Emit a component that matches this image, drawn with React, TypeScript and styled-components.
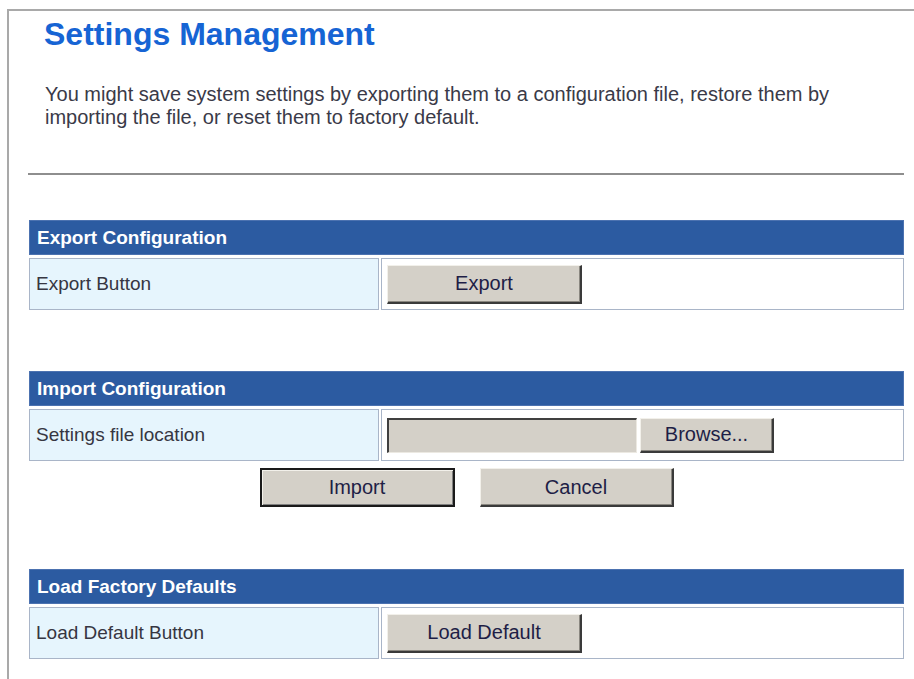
import styled, { createGlobalStyle } from "styled-components";

const GlobalStyle = createGlobalStyle`
  html, body {
    margin: 0;
    padding: 0;
    background: #ffffff;
  }
  body {
    font-family: "Liberation Sans", Arial, sans-serif;
  }
  * {
    box-sizing: border-box;
  }
`;

const Page = styled.div`
  padding: 9px 0 0 7px;
  min-height: 100vh;
`;

const Frame = styled.div`
  border-top: 2px solid #a9a9a9;
  border-left: 2px solid #a9a9a9;
  min-height: calc(100vh - 9px);
  padding: 0 10px 40px 20px;
`;

const Title = styled.h1`
  margin: 5px 0 0 15px;
  font-size: 32px;
  line-height: 36px;
  font-weight: 700;
  color: #1664d4;
`;

const Intro = styled.p`
  margin: 31px 0 0 16px;
  font-size: 20px;
  line-height: 23px;
  color: #3a3a48;
`;

const Rule = styled.div`
  height: 2px;
  margin: 44px 0 0 -1px;
  background: #8e8e8e;
`;

const Section = styled.section<{ $top: number }>`
  margin-top: ${(p) => p.$top}px;
`;

const SectionHeader = styled.div`
  height: 35px;
  display: flex;
  align-items: center;
  padding-left: 7px;
  background: #2c5ba1;
  border: 1px solid #4c72b0;
  color: #ffffff;
  font-size: 19px;
  font-weight: 700;
`;

const FieldRow = styled.div`
  display: grid;
  grid-template-columns: 350px 1fr;
  gap: 2px;
  margin-top: 3px;
  height: 52px;
`;

const LabelCell = styled.div`
  display: flex;
  align-items: center;
  padding-left: 6px;
  background: #e6f5fd;
  border: 1px solid #a9b5c8;
  color: #363642;
  font-size: 19px;
`;

const ValueCell = styled.div`
  display: flex;
  align-items: center;
  gap: 3px;
  padding-left: 5px;
  background: #ffffff;
  border: 1px solid #a9b5c8;
`;

const Button = styled.button<{ $width: number; $default?: boolean }>`
  width: ${(p) => p.$width}px;
  height: 39px;
  padding: 0;
  background: #d4d0c8;
  font-family: "Liberation Sans", Arial, sans-serif;
  font-size: 20px;
  color: #1e1e46;
  border-style: solid;
  border-width: ${(p) => (p.$default ? "2px" : "1px 2px 2px 1px")};
  border-color: ${(p) =>
    p.$default ? "#1a1a1a" : "#f2f0ea #3a3a3a #3a3a3a #f2f0ea"};
  box-shadow: ${(p) =>
    p.$default
      ? "inset 1px 1px #f2f0ea, inset -1px -1px #808080"
      : "inset -1px -1px #8a8780"};
  cursor: pointer;
`;

const FileBox = styled.div`
  width: 250px;
  height: 35px;
  background: #d4d0c8;
  border-style: solid;
  border-width: 2px 1px 1px 2px;
  border-color: #404040 #ece9e2 #ece9e2 #404040;
`;

const BrowseButton = styled(Button)`
  height: 35px;
`;

const ActionRow = styled.div`
  display: flex;
  justify-content: center;
  gap: 25px;
  margin-top: 7px;
`;

export default function App() {
  return (
    <>
      <GlobalStyle />
      <Page>
        <Frame>
          <Title>Settings Management</Title>
          <Intro>
            You might save system settings by exporting them to a configuration file, restore them by
            <br />
            importing the file, or reset them to factory default.
          </Intro>
          <Rule />

          <Section $top={45}>
            <SectionHeader>Export Configuration</SectionHeader>
            <FieldRow>
              <LabelCell>Export Button</LabelCell>
              <ValueCell>
                <Button $width={195}>Export</Button>
              </ValueCell>
            </FieldRow>
          </Section>

          <Section $top={61}>
            <SectionHeader>Import Configuration</SectionHeader>
            <FieldRow>
              <LabelCell>Settings file location</LabelCell>
              <ValueCell>
                <FileBox />
                <BrowseButton $width={134}>Browse...</BrowseButton>
              </ValueCell>
            </FieldRow>
            <ActionRow>
              <Button $width={195} $default>
                Import
              </Button>
              <Button $width={194}>Cancel</Button>
            </ActionRow>
          </Section>

          <Section $top={62}>
            <SectionHeader>Load Factory Defaults</SectionHeader>
            <FieldRow>
              <LabelCell>Load Default Button</LabelCell>
              <ValueCell>
                <Button $width={195}>Load Default</Button>
              </ValueCell>
            </FieldRow>
          </Section>
        </Frame>
      </Page>
    </>
  );
}
